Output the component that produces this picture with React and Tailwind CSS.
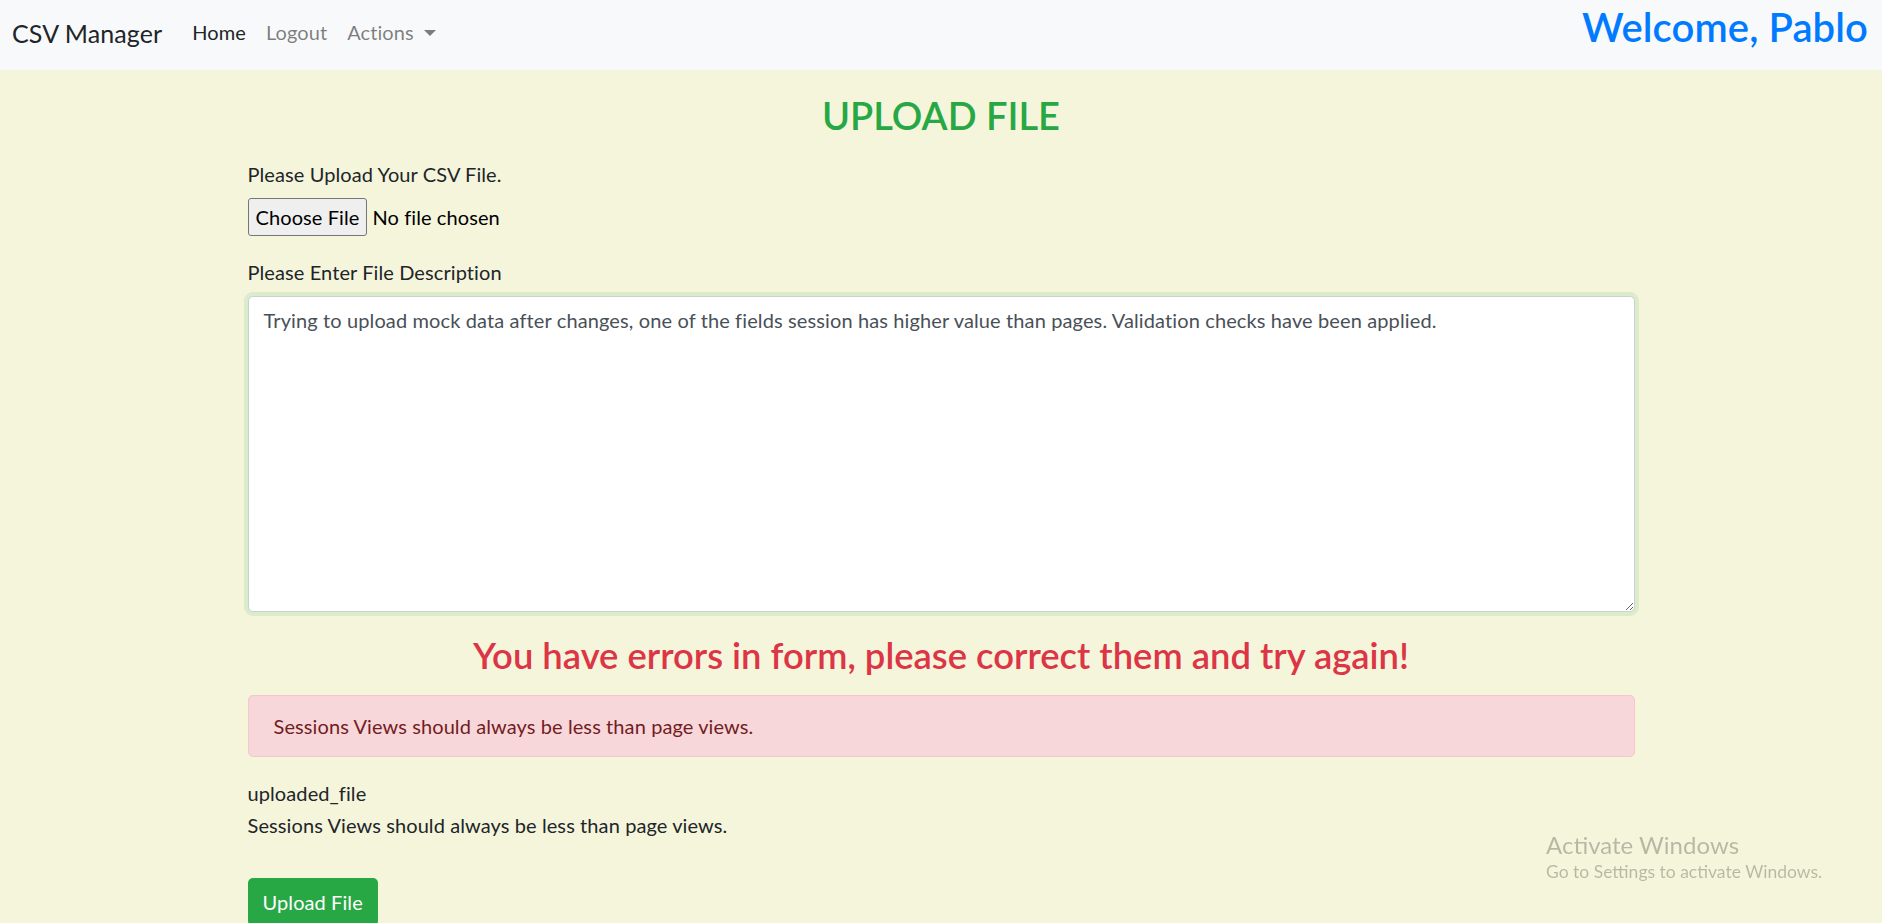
import React from "react";

const font = { fontFamily: '"Segoe UI", Lato, "Noto Sans", sans-serif' };

function NavBar() {
  return (
    <nav className="flex h-[70px] items-center justify-between bg-[#f8f9fa] pl-3 pr-[14px]">
      <div className="flex items-center">
        <a className="-mt-[3px] mr-[30px] text-[25px] leading-none text-[#212529]">CSV Manager</a>
        <ul className="-mt-[6px] flex items-center text-[20px]">
          <li className="pr-[20px] text-[#212529]">Home</li>
          <li className="pr-[20px] text-[#00000080]">Logout</li>
          <li className="flex items-center text-[#00000080]">
            Actions
            <span className="ml-[10px] mt-[2px] inline-block h-0 w-0 border-x-[6px] border-t-[6px] border-x-transparent border-t-[#00000080]" />
          </li>
        </ul>
      </div>
      <h2 className="-mt-[17px] text-[40px] font-semibold leading-[1.2] text-[#007bff]">Welcome, Pablo</h2>
    </nav>
  );
}

export default function App() {
  return (
    <div className="min-h-[923px] bg-[#f5f5dc] tracking-[0.006em] text-[#212529]" style={font}>
      <NavBar />
      <main className="mx-auto w-[1425px] px-[19px]">
        <h2 className="mt-[22px] text-center text-[38px] font-semibold leading-[1.26] tracking-normal text-[#28a745]">
          UPLOAD FILE
        </h2>

        <label className="mt-[19px] block text-[20px] leading-[30px]">Please Upload Your CSV File.</label>
        <div className="mt-[9px] flex items-center text-[20px]">
          <button className="h-[38px] rounded-[3px] border border-[#767676] bg-[#efefef] px-[7px] text-[20px] leading-none text-black">
            Choose File
          </button>
          <span className="ml-[5px] text-black">No file chosen</span>
        </div>

        <label className="mt-[21px] block text-[20px] leading-[30px]">Please Enter File Description</label>
        <textarea
          className="mt-[9px] block h-[316px] w-full resize-y rounded-[5px] border border-[#c8d0d8] bg-white px-[15px] py-[8px] text-[20px] leading-[30px] tracking-[0.006em] text-[#495057] shadow-[0_0_0_4px_rgba(40,167,69,0.12)] outline-none"
          defaultValue="Trying to upload mock data after changes, one of the fields session has higher value than pages. Validation checks have been applied."
        />

        <h3 className="mt-[22px] text-center text-[36.4px] font-semibold leading-[1.2] tracking-normal text-[#dc3545]">
          You have errors in form, please correct them and try again!
        </h3>

        <div className="mt-[17px] rounded-[5px] border border-[#f5c6cb] bg-[#f8d7da] px-[25px] py-[15px] text-[20px] leading-[30px] text-[#721c24]">
          Sessions Views should always be less than page views.
        </div>

        <div className="mt-[21px] text-[20px] leading-[30px]">
          <p>uploaded_file</p>
          <p className="mt-[2px]">Sessions Views should always be less than page views.</p>
        </div>

        <button className="mt-[38px] h-[48px] rounded-[5px] bg-[#28a745] px-[15px] text-[20px] leading-[30px] text-white">
          Upload File
        </button>
      </main>

      <div className="pointer-events-none fixed left-[1546px] top-[830px] tracking-normal text-[#00000040]">
        <p className="text-[24px] leading-[30px]">Activate Windows</p>
        <p className="text-[17.5px] leading-[24px]">Go to Settings to activate Windows.</p>
      </div>
    </div>
  );
}
